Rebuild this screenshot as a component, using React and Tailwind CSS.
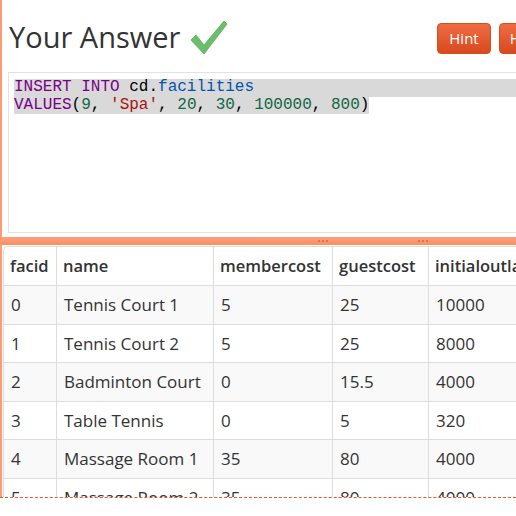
import React from "react";

const rows = [
  ["0", "Tennis Court 1", "5", "25", "10000"],
  ["1", "Tennis Court 2", "5", "25", "8000"],
  ["2", "Badminton Court", "0", "15.5", "4000"],
  ["3", "Table Tennis", "0", "5", "320"],
  ["4", "Massage Room 1", "35", "80", "4000"],
  ["5", "Massage Room 2", "35", "80", "4000"],
];

const widths = ["w-[53px]", "w-[157px]", "w-[119px]", "w-[96px]", "w-[110px]"];

function Check() {
  return (
    <svg width="38" height="36" viewBox="0 0 38 36" className="ml-[10px] mt-[3px]">
      <polygon
        points="1,20 6,15 14,25 34,1 37,4 14,34"
        fill="#6cbf6a"
        stroke="#58a958"
        strokeWidth="0.8"
        strokeLinejoin="round"
      />
    </svg>
  );
}

function Btn({ children }) {
  return (
    <div className="w-[54px] h-[31px] rounded-[4px] border border-[#d2501f] bg-gradient-to-b from-[#ef6c43] to-[#d9481c] text-white text-[15px] flex items-center justify-center font-['Open_Sans',sans-serif]">
      {children}
    </div>
  );
}

function Dots() {
  return (
    <div className="flex gap-[2px]">
      <div className="w-[2px] h-[2px] bg-[#e5704a]" />
      <div className="w-[2px] h-[2px] bg-[#e5704a]" />
      <div className="w-[2px] h-[2px] bg-[#e5704a]" />
    </div>
  );
}

export default function App() {
  return (
    <div className="w-[516px] h-[516px] overflow-hidden bg-white">
      <div className="h-[498px] border-b border-dashed border-[#dd5a30] flex overflow-hidden">
        <div className="w-[2px] shrink-0 bg-[#ff9b70]" />
        <div className="w-[560px] shrink-0 flex flex-col">
          <div className="h-[72px] shrink-0 flex items-center justify-between pl-[7px] pr-[9px]">
            <div className="flex items-center">
              <span className="text-[29px] text-[#333] font-['Open_Sans',sans-serif] leading-none">
                Your Answer
              </span>
              <Check />
            </div>
            <div className="flex gap-[8px] mt-[5px]">
              <Btn>Hint</Btn>
              <Btn>Help</Btn>
            </div>
          </div>
          <div className="shrink-0 ml-[6px] h-[161px] border border-[#e2e2e2] pt-[6px] pl-[5px] font-['Liberation_Mono',monospace] text-[16px] leading-[17.5px] text-black">
            <div className="bg-[#d9d9d9] whitespace-pre">
              <span className="text-[#770088]">INSERT INTO</span> cd.
              <span className="text-[#0055aa]">facilities</span>
            </div>
            <div className="whitespace-pre">
              <span className="bg-[#d9d9d9]">
                <span className="text-[#770088]">VALUES</span>(
                <span className="text-[#116644]">9</span>,{" "}
                <span className="text-[#aa1111]">'Spa'</span>,{" "}
                <span className="text-[#116644]">20</span>,{" "}
                <span className="text-[#116644]">30</span>,{" "}
                <span className="text-[#116644]">100000</span>,{" "}
                <span className="text-[#116644]">800</span>)
              </span>
            </div>
          </div>
          <div className="shrink-0 mt-[4px] h-[8px] bg-gradient-to-b from-[#ffa07c] to-[#fb8e64] flex items-center">
            <div className="ml-[316px]">
              <Dots />
            </div>
            <div className="ml-[90px]">
              <Dots />
            </div>
          </div>
          <div className="shrink-0 mt-[1px] ml-[1px] border-l border-t border-[#dddddd] rounded-tl-[5px] font-['Open_Sans',sans-serif] text-[17px] text-[#333]">
            <div className="flex h-[39px] border-b border-[#dddddd] font-semibold text-[16.5px]">
              {["facid", "name", "membercost", "guestcost", "initialoutlay"].map((h, i) => (
                <div key={h} className={`${widths[i]} shrink-0 border-r border-[#dddddd] pl-[6px] flex items-center whitespace-nowrap overflow-hidden`}>
                  {h}
                </div>
              ))}
            </div>
            {rows.map((r, ri) => (
              <div
                key={ri}
                className={`flex h-[38.5px] border-b border-[#dddddd] ${ri % 2 === 0 ? "bg-[#f9f9f9]" : "bg-white"}`}
              >
                {r.map((c, i) => (
                  <div key={i} className={`${widths[i]} shrink-0 border-r border-[#dddddd] pl-[7px] flex items-center whitespace-nowrap`}>
                    {c}
                  </div>
                ))}
              </div>
            ))}
          </div>
        </div>
      </div>
    </div>
  );
}
